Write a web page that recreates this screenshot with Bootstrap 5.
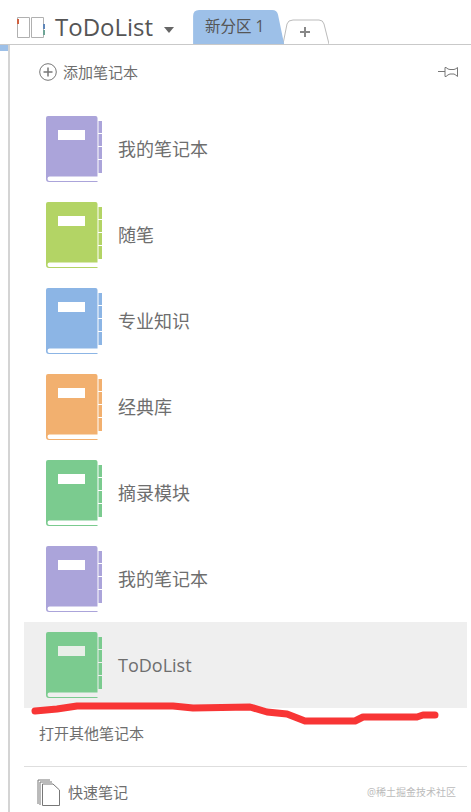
<!DOCTYPE html>
<html lang="zh-CN">
<head>
    <meta charset="UTF-8">
    <meta name="viewport" content="width=device-width, initial-scale=1.0">
    <title>ToDoList</title>
    <link rel="stylesheet" href="https://cdn.jsdelivr.net/npm/bootstrap@5.3.0/dist/css/bootstrap.min.css">
    <script src="https://cdn.jsdelivr.net/npm/bootstrap@5.3.0/dist/js/bootstrap.bundle.min.js"></script>

    <style>
        body {
            font-family: "Open Sans", "Noto Sans CJK SC", sans-serif;
            color: #6e6e6e;
            background-color: #fff;
            height: 812px;
            overflow: hidden;
        }

        .top-bar {
            height: 45px;
            border-bottom: 1px solid #c9c9c9;
            padding-left: 16px;
        }

        .title-wrap {
            padding-top: 10px;
        }

        .title-text {
            font-size: 24px;
            line-height: 1;
            color: #555;
            margin-left: 10px;
        }

        .title-caret {
            width: 0;
            height: 0;
            margin-left: 11px;
            margin-top: 5px;
            border-left: 5.5px solid transparent;
            border-right: 5.5px solid transparent;
            border-top: 6px solid #666;
        }

        .section-tab {
            width: 91px;
            height: 34px;
            margin-left: 19px;
            padding-left: 12px;
            background-color: #9dc0e8;
            clip-path: path('M0 34V6Q0 0 6 0H79Q84 0 85 5L91 34Z');
            font-size: 15.5px;
            color: #555;
        }

        .add-tab {
            width: 46px;
            height: 25px;
            margin-left: -1px;
        }

        .side-strip {
            width: 8px;
        }

        .side-strip-blue {
            height: 6px;
            background-color: #9dc0e8;
        }

        .panel-main {
            position: relative;
            border-left: 2px solid #d4d4d4;
            padding-left: 14px;
            padding-right: 4px;
        }

        .add-row {
            height: 61px;
            padding: 0 9px 7px 15px;
            font-size: 15px;
        }

        .add-label {
            margin-left: 6px;
        }

        .book-row {
            height: 86px;
            padding-left: 22px;
            font-size: 18px;
        }

        .book-row-active {
            background-color: #efefef;
        }

        .book-name {
            margin-left: 16px;
        }

        .open-row {
            height: 58px;
            padding-left: 15px;
            padding-bottom: 8px;
            font-size: 15px;
        }

        .quick-row {
            height: 46px;
            border-top: 1px solid #dedede;
            padding: 6px 11px 0 13px;
            font-size: 15px;
        }

        .quick-label {
            margin-left: 7px;
        }

        .water-text {
            font-size: 10px;
            color: #bbb;
        }

        .red-scribble {
            position: absolute;
            left: -10px;
            top: 0;
            pointer-events: none;
        }
    </style>
</head>
<body>
    <svg width="0" height="0" class="d-block">
        <symbol id="bookIcon" viewBox="0 0 56 66">
            <path d="M2 0H49.500Q51.500 0 51.500 2V60.500H3.500Q1.500 60.500 1.500 62.800Q1.500 65 3.500 65H51.500V66H3Q0 66 0 63V2Q0 0 2 0Z" fill="currentColor"/>
            <rect x="52.500" y="5" width="3.500" height="12" fill="currentColor"/>
            <rect x="52.500" y="18" width="3.500" height="12" fill="currentColor"/>
            <rect x="52.500" y="31" width="3.500" height="12" fill="currentColor"/>
            <rect x="52.500" y="44" width="3.500" height="13" fill="currentColor"/>
        </symbol>
    </svg>

    <!-- Top bar -->
    <div class="top-bar d-flex align-items-end">
        <div class="title-wrap d-flex align-items-center align-self-center">
            <svg width="29" height="23" viewBox="0 0 29 23" fill="none">
                <path d="M1.500 1.500H13.500V21.500H1.500ZM15.500 1.500H27.500V21.500H15.500Z" stroke="#b0b0b0"/>
                <rect x="1" y="3" width="2" height="5" fill="#d0603f"/>
                <rect x="27" y="8" width="2" height="5" fill="#5f86b8"/>
                <rect x="27" y="14" width="2" height="5" fill="#6ea596"/>
            </svg>
            <span class="title-text">ToDoList</span>
            <span class="title-caret"></span>
        </div>
        <div class="section-tab d-flex align-items-center">新分区 1</div>
        <svg class="add-tab" viewBox="0 0 46 25" fill="none">
            <path d="M0 25L4 5Q5 1 10 1H36Q40 1 41 5L46 25" stroke="#bbb"/>
            <path d="M17 13H27M22 8V18" stroke="#888" stroke-width="2"/>
        </svg>
    </div>

    <div class="d-flex">
        <div class="side-strip flex-shrink-0">
            <div class="side-strip-blue"></div>
        </div>
        <div class="panel-main flex-grow-1">
            <!-- Add notebook -->
            <div class="add-row d-flex align-items-center justify-content-between">
                <div class="d-flex align-items-center">
                    <svg width="18" height="18" viewBox="0 0 18 18" fill="none" stroke="#777">
                        <circle cx="9" cy="9" r="8.300"/>
                        <path d="M4.500 9H13.500M9 4.500V13.500" stroke-width="1.500"/>
                    </svg>
                    <span class="add-label">添加笔记本</span>
                </div>
                <svg width="20" height="12" viewBox="0 0 20 12" fill="none" stroke="#777">
                    <path d="M0 5.500H7M7 1.500H8Q10 3.500 12 3.500H16Q18 3 19.500 1.500V10.500Q18 9 16 8H12Q10 8.500 8 10.500H7Z"/>
                </svg>
            </div>

            <!-- Notebook list -->
            <div class="book-row d-flex align-items-center">
                <svg width="56" height="66" style="color:#aba4da"><use href="#bookIcon"/><rect x="12" y="14" width="27" height="10" fill="#fff"/></svg>
                <span class="book-name">我的笔记本</span>
            </div>
            <div class="book-row d-flex align-items-center">
                <svg width="56" height="66" style="color:#b3d465"><use href="#bookIcon"/><rect x="12" y="14" width="27" height="10" fill="#fff"/></svg>
                <span class="book-name">随笔</span>
            </div>
            <div class="book-row d-flex align-items-center">
                <svg width="56" height="66" style="color:#8cb5e5"><use href="#bookIcon"/><rect x="12" y="14" width="27" height="10" fill="#fff"/></svg>
                <span class="book-name">专业知识</span>
            </div>
            <div class="book-row d-flex align-items-center">
                <svg width="56" height="66" style="color:#f2b06f"><use href="#bookIcon"/><rect x="12" y="14" width="27" height="10" fill="#fff"/></svg>
                <span class="book-name">经典库</span>
            </div>
            <div class="book-row d-flex align-items-center">
                <svg width="56" height="66" style="color:#7bcb8f"><use href="#bookIcon"/><rect x="12" y="14" width="27" height="10" fill="#fff"/></svg>
                <span class="book-name">摘录模块</span>
            </div>
            <div class="book-row d-flex align-items-center">
                <svg width="56" height="66" style="color:#aba4da"><use href="#bookIcon"/><rect x="12" y="14" width="27" height="10" fill="#fff"/></svg>
                <span class="book-name">我的笔记本</span>
            </div>
            <div class="book-row book-row-active d-flex align-items-center">
                <svg width="56" height="66" style="color:#7bcb8f"><use href="#bookIcon"/><rect x="12" y="14" width="27" height="10" fill="#e8efe8"/></svg>
                <span class="book-name">ToDoList</span>
            </div>

            <!-- Open other -->
            <div class="open-row d-flex align-items-center">打开其他笔记本</div>

            <!-- Quick notes -->
            <div class="quick-row d-flex align-items-center justify-content-between">
                <div class="d-flex align-items-center">
                    <svg width="24" height="27" viewBox="0 0 24 27" fill="none" stroke="#777">
                        <path d="M1 25V1H13M3 26V3H15M5.500 26.500V5H16L22.500 11V26.500Z"/>
                    </svg>
                    <span class="quick-label">快速笔记</span>
                </div>
                <span class="water-text">@稀土掘金技术社区</span>
            </div>

            <!-- Hand-drawn red mark over the page -->
            <svg class="red-scribble" width="471" height="767" fill="none">
                <path d="M35 666L57 664L77 661H173L193 663L250 662L267 667L287 669L305 676H355L363 672L417 672L423 670H435" stroke="#f83535" stroke-width="7" stroke-linecap="round" stroke-linejoin="round"/>
            </svg>
        </div>
    </div>
</body>
</html>
